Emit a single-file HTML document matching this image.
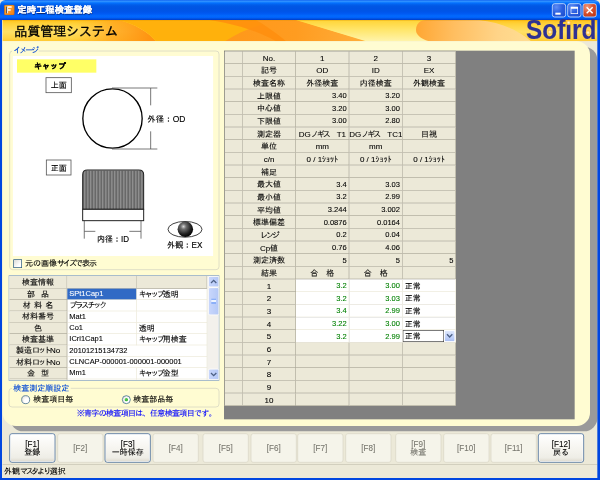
<!DOCTYPE html>
<html lang="ja"><head><meta charset="utf-8"><title>定時工程検査登録</title>
<style>
html,body{margin:0;padding:0;}
body{width:600px;height:480px;overflow:hidden;background:#0046E0;}
#w{position:absolute;left:0;top:0;width:900px;height:720px;transform:scale(0.666667);transform-origin:0 0;filter:blur(0.35px);
   font-family:"Liberation Sans","IPAGothic",sans-serif;font-size:12px;color:#000;background:#ECE9D8;overflow:hidden;line-height:1;-webkit-text-stroke:0.13px;}
#w *{box-sizing:border-box;}
.abs{position:absolute;}
.k{letter-spacing:-3px;}
#title{position:absolute;left:0;top:0;width:900px;height:30px;border-radius:8px 8px 0 0;
 background:linear-gradient(#0058EE 0%,#3A93FF 5%,#288EFF 8%,#127DFF 12%,#036FFC 16%,#0262EE 22%,#0057E5 30%,#0054E3 44%,#0055EB 60%,#005BF5 70%,#026AFE 80%,#0061FC 88%,#0054E3 93%,#0144D0 97%,#003DD7 100%);}
#title .tt{position:absolute;left:26px;top:8px;font-size:14px;font-weight:bold;color:#fff;text-shadow:1px 1px 1px #0A246A;letter-spacing:0px;white-space:nowrap;}
.bl{position:absolute;background:#0046E0;}
.wb{position:absolute;top:5px;width:21px;height:21px;border:1px solid #fff;border-radius:4px;
 background:radial-gradient(circle at 30% 25%,#5E8DF5 0%,#2A5FE0 45%,#1C4BCB 100%);}
.wb.x{background:radial-gradient(circle at 30% 25%,#F09A7E 0%,#D9512E 45%,#B8300F 100%);}
#panel{position:absolute;left:4px;top:62px;width:881px;height:577px;border-radius:0 20px 20px 20px;background:#FFFCD2;box-shadow:11px 8px 0 #9A9A9A;}
.gb{position:absolute;border:1px solid #D0D0BF;border-radius:5px;}
.gl{position:absolute;color:#0046D5;background:#FFFCD2;padding:0 2px;white-space:nowrap;}
.t{position:absolute;white-space:nowrap;}
/* info grid */
#ig{position:absolute;left:13px;top:413px;width:316px;height:158px;background:#fff;border:1px solid #7F9DB9;overflow:hidden;}
#ig .r{position:absolute;left:0;width:297px;height:17px;}
#ig .c{position:absolute;top:0;height:17px;border-right:1px solid #ECE9D8;border-bottom:1px solid #ECE9D8;padding:2px 0 0 3px;white-space:nowrap;overflow:visible;}
#ig .h{background:#ECE9D8;border-right:1px solid #ACA899;border-bottom:1px solid #ACA899;text-align:center;padding-left:0;}
/* big grid */
#bg{position:absolute;left:336px;top:76px;width:526px;height:553px;background:#808080;overflow:hidden;}
#bt{position:absolute;left:0;top:0;border-top:1px solid #716F64;border-left:1px solid #716F64;}
#bt .r{position:relative;height:19px;width:347px;}
#bt .c{position:absolute;top:0;height:19px;width:80px;background:#ECE9D8;border-right:1px solid #ACA899;border-bottom:1px solid #ACA899;padding-top:4px;text-align:center;white-space:nowrap;overflow:hidden;}
#bt .c0{left:0;width:27px;}
#bt .c1{left:27px;}
#bt .c2{left:107px;}
#bt .c3{left:187px;}
#bt .c4{left:267px;}
#bt .n{text-align:right;padding-right:3px;font-size:11.300px;}
#bt .w{background:#fff;border-right-color:#ECE9D8;border-bottom-color:#ECE9D8;}
#bt .g{color:#008000;}
#bt .l{text-align:left;padding-left:3px;}
/* fn buttons */
.fb{position:absolute;top:650px;width:69px;height:44px;border-radius:4px;text-align:center;font-size:12px;line-height:12px;}
.fb.e{border:1px solid #2D5A94;background:linear-gradient(#FFFFFF 0%,#F6F5F0 50%,#EEEDE6 85%,#DCD8CC 100%);color:#000;box-shadow:inset 0 0 0 1px #fff;}
.fb.d{border:1px solid #D8D5C4;background:#F5F4EA;color:#76756D;}
.fb span{position:absolute;left:0;right:0;}
.dot{width:6px;height:6px;border-radius:3px;background:radial-gradient(circle,#FFFBE8 0%,#FFE08A 40%,#FFA020 100%);box-shadow:0 0 1px 0.5px #FFB040;}
.fb .fl{font-size:13.500px;line-height:14px;transform:scaleX(0.9);}
.sp9{display:inline-block;width:9px;}.sp5{display:inline-block;width:5px;}
#status{position:absolute;left:4px;top:696px;width:892px;height:20px;background:#ECE9D8;border-top:1px solid #C5C2B2;}
</style></head>
<body>
<div id="w">
<div id="title">
 <svg class="abs" style="left:6px;top:7px" width="16" height="16" viewBox="0 0 16 16"><defs><linearGradient id="ic" x1="0" y1="0" x2="1" y2="1"><stop offset="0" stop-color="#FFB63C"/><stop offset="1" stop-color="#F07A10"/></linearGradient></defs><rect x="0.500" y="0.500" width="15" height="15" rx="2" fill="url(#ic)" stroke="#C8640A"/><path d="M5,3 L5,13 M5,3.500 L11.500,3.500 M5,8 L10,8" stroke="#fff" stroke-width="2.200" fill="none"/><path d="M4,3 L4,13" stroke="#222" stroke-width="1.200"/></svg>
 <div class="tt">定時工程検査登録</div>
 <div class="wb" style="left:828px"><div class="abs" style="left:4px;top:13px;width:8px;height:3px;background:#fff"></div></div>
 <div class="wb" style="left:851px"><div class="abs" style="left:4px;top:4px;width:11px;height:11px;border:1px solid #fff;border-top-width:3px"></div></div>
 <div class="wb x" style="left:874px"><svg class="abs" style="left:0;top:0" width="19" height="19"><path d="M5,5 L14,14 M14,5 L5,14" stroke="#fff" stroke-width="2.200"/></svg></div>
</div>

<svg class="abs" style="left:4px;top:30px" width="892" height="32" viewBox="2.667 20 594.667 21.333" preserveAspectRatio="none">
 <defs>
  <linearGradient id="hy" x1="0" y1="0" x2="0" y2="1">
   <stop offset="0" stop-color="#FFC21A"/><stop offset="0.18" stop-color="#FFD23A"/><stop offset="0.55" stop-color="#FFE066"/><stop offset="0.85" stop-color="#FFD445"/><stop offset="1" stop-color="#FFC830"/>
  </linearGradient>
  <linearGradient id="hy2" x1="0" y1="0" x2="0" y2="1">
   <stop offset="0" stop-color="#FFD436"/><stop offset="0.5" stop-color="#FFE770"/><stop offset="1" stop-color="#FFF4AC"/>
  </linearGradient>
  <linearGradient id="ho1" gradientUnits="userSpaceOnUse" x1="75" y1="20" x2="150" y2="34">
   <stop offset="0" stop-color="#FFB428" stop-opacity="0"/><stop offset="0.5" stop-color="#FFA41C" stop-opacity="0.75"/><stop offset="1" stop-color="#FF9412"/>
  </linearGradient>
  <linearGradient id="hbl" gradientUnits="userSpaceOnUse" x1="225" y1="30" x2="366" y2="41">
   <stop offset="0" stop-color="#FF981A"/><stop offset="0.5" stop-color="#FF9C20"/><stop offset="1" stop-color="#FFAE3C"/>
  </linearGradient>
  <linearGradient id="hb" gradientUnits="userSpaceOnUse" x1="416" y1="25" x2="525" y2="36">
   <stop offset="0" stop-color="#FFA632"/><stop offset="0.35" stop-color="#FFBE60"/><stop offset="0.75" stop-color="#FFD488"/><stop offset="1" stop-color="#FFDC90"/>
  </linearGradient>
 </defs>
 <rect x="0" y="20" width="600" height="21.333" fill="url(#hy)"/>
 <path d="M55,20 L119,20 C135,24 148,32 156,41.333 L55,41.333 Z" fill="url(#ho1)"/>
 <path d="M119,20 L296,20 L366,41.333 L156,41.333 C148,32 135,24 119,20 Z" fill="#FFB10C"/>
 <path d="M225,41.333 C236,34 250,28 262,24.500 L256,20 L296,20 L366,41.333 Z" fill="url(#hbl)"/>
 <path d="M210,20 L256,20 C266,26 278,34 286,41.333 L276,41.333 C262,33 240,25 210,20 Z" fill="#FF8E0E" opacity="0.85"/>
 <path d="M296,20 L480,20 L531,41.333 L366,41.333 Z" fill="url(#hy2)"/>
 <path d="M416,30 C416,24 420,20 426,20 L478,20 C500,22 518,30 531,41.333 L429,41.333 C420,38.500 416,34.500 416,30 Z" fill="url(#hb)"/>
 <rect x="0" y="20" width="600" height="0.6" fill="#D89000" opacity="0.45"/>
</svg>

<div class="t" style="left:21.500px;top:37.300px;font-size:20px;letter-spacing:-0.65px;-webkit-text-stroke:0.45px;">品質管理システム</div>
<div class="t" style="left:789px;top:24px;font-size:42px;font-weight:bold;color:#2E3192;transform:scaleX(0.87);transform-origin:0 0;-webkit-text-stroke:0.2px #2E3192;">Sofird</div>
<div class="abs" style="left:848.500px;top:30px;width:9.500px;height:7px;background:linear-gradient(#FFC720,#FFCF32)"></div>
<div class="abs dot" style="left:850px;top:30.500px"></div>
<div class="abs dot" style="left:821.500px;top:45px"></div>
<div class="abs dot" style="left:878.500px;top:45.500px"></div>
<div id="panel"></div>
<div class="gb" style="left:14px;top:76px;width:315px;height:329px"></div>
<div class="gl" style="left:18px;top:70px"><span class="k">イメージ</span></div>

<svg class="abs" style="left:19px;top:84px" width="301" height="300" viewBox="19 84 301 300">
 <defs>
  <radialGradient id="ball" cx="0.38" cy="0.32" r="0.7">
   <stop offset="0" stop-color="#D8D8D8"/><stop offset="0.25" stop-color="#707070"/><stop offset="0.7" stop-color="#202020"/><stop offset="1" stop-color="#000"/>
  </radialGradient>
  <clipPath id="capclip"><path d="M124,314 L124,262 Q124,255 131,255 L208,255 Q215.5,255 215.5,262 L215.5,314 Z"/></clipPath>
 </defs>
 <rect x="19" y="84" width="301" height="300" fill="#fff"/>
 <rect x="25.5" y="89" width="119" height="20" fill="#FFFF66"/>
 <rect x="69" y="116.500" width="38" height="22.500" fill="#fff" stroke="#555" stroke-width="1.2"/>
 <rect x="69.500" y="240" width="37" height="22.500" fill="#fff" stroke="#555" stroke-width="1.2"/>
 <circle cx="168.750" cy="177.750" r="44.500" fill="#fff" stroke="#000" stroke-width="2"/>
 <g stroke="#555" stroke-width="1.2" fill="none">
  <line x1="168" y1="132" x2="236" y2="132"/><line x1="168" y1="223.500" x2="236" y2="223.500"/>
  <line x1="226" y1="132" x2="226" y2="158"/><line x1="226" y1="197" x2="226" y2="223.500"/>
  <line x1="126.400" y1="331" x2="126.400" y2="358"/><line x1="126.400" y1="347" x2="143" y2="347"/>
  <line x1="211.500" y1="331" x2="211.500" y2="358"/><line x1="194" y1="347" x2="211.500" y2="347"/>
 </g>
 <path d="M124,314 L124,262 Q124,255 131,255 L208,255 Q215.5,255 215.500,262 L215.500,314 Z" fill="#B8B8B8"/>
 <g stroke="#3C3C3C" stroke-width="1.15" clip-path="url(#capclip)"><line x1="125.5" y1="256" x2="125.5" y2="314"/><line x1="127.8" y1="256" x2="127.8" y2="314"/><line x1="130.0" y1="256" x2="130.0" y2="314"/><line x1="132.2" y1="256" x2="132.2" y2="314"/><line x1="134.5" y1="256" x2="134.5" y2="314"/><line x1="136.8" y1="256" x2="136.8" y2="314"/><line x1="139.0" y1="256" x2="139.0" y2="314"/><line x1="141.2" y1="256" x2="141.2" y2="314"/><line x1="143.5" y1="256" x2="143.5" y2="314"/><line x1="145.8" y1="256" x2="145.8" y2="314"/><line x1="148.0" y1="256" x2="148.0" y2="314"/><line x1="150.2" y1="256" x2="150.2" y2="314"/><line x1="152.5" y1="256" x2="152.5" y2="314"/><line x1="154.8" y1="256" x2="154.8" y2="314"/><line x1="157.0" y1="256" x2="157.0" y2="314"/><line x1="159.2" y1="256" x2="159.2" y2="314"/><line x1="161.5" y1="256" x2="161.5" y2="314"/><line x1="163.8" y1="256" x2="163.8" y2="314"/><line x1="166.0" y1="256" x2="166.0" y2="314"/><line x1="168.2" y1="256" x2="168.2" y2="314"/><line x1="170.5" y1="256" x2="170.5" y2="314"/><line x1="172.8" y1="256" x2="172.8" y2="314"/><line x1="175.0" y1="256" x2="175.0" y2="314"/><line x1="177.2" y1="256" x2="177.2" y2="314"/><line x1="179.5" y1="256" x2="179.5" y2="314"/><line x1="181.8" y1="256" x2="181.8" y2="314"/><line x1="184.0" y1="256" x2="184.0" y2="314"/><line x1="186.2" y1="256" x2="186.2" y2="314"/><line x1="188.5" y1="256" x2="188.5" y2="314"/><line x1="190.8" y1="256" x2="190.8" y2="314"/><line x1="193.0" y1="256" x2="193.0" y2="314"/><line x1="195.2" y1="256" x2="195.2" y2="314"/><line x1="197.5" y1="256" x2="197.5" y2="314"/><line x1="199.8" y1="256" x2="199.8" y2="314"/><line x1="202.0" y1="256" x2="202.0" y2="314"/><line x1="204.2" y1="256" x2="204.2" y2="314"/><line x1="206.5" y1="256" x2="206.5" y2="314"/><line x1="208.8" y1="256" x2="208.8" y2="314"/><line x1="211.0" y1="256" x2="211.0" y2="314"/><line x1="213.2" y1="256" x2="213.2" y2="314"/><line x1="215.5" y1="256" x2="215.5" y2="314"/></g>
 <path d="M124,314 L124,262 Q124,255 131,255 L208,255 Q215.5,255 215.500,262 L215.500,314 Z" fill="none" stroke="#222" stroke-width="1.5"/>
 <rect x="124" y="314" width="91.500" height="17" fill="#fff" stroke="#222" stroke-width="1.5"/>
 <ellipse cx="277.500" cy="344" rx="25.500" ry="11.800" fill="#fff" stroke="#222" stroke-width="1.3"/>
 <circle cx="278" cy="344" r="11.600" fill="url(#ball)"/>
 <g font-family="'Liberation Sans','IPAGothic',sans-serif" fill="#000" stroke="#000" stroke-width="0.2">
  <text x="51" y="104" font-size="12" font-weight="bold">キャップ</text>
  <text x="76" y="132.500" font-size="12">上面</text>
  <text x="76" y="256" font-size="12">正面</text>
  <text x="221" y="182.500" font-size="12.500" textLength="57" lengthAdjust="spacingAndGlyphs">外径：OD</text>
  <text x="145.500" y="363.500" font-size="12.500" textLength="48" lengthAdjust="spacingAndGlyphs">内径：ID</text>
  <text x="250.500" y="371.500" font-size="12.500" textLength="53" lengthAdjust="spacingAndGlyphs">外観：EX</text>
 </g>
</svg>

<div class="abs" style="left:19.500px;top:388.500px;width:13px;height:13px;border:1px solid #1C5180;background:linear-gradient(135deg,#DCDCD7,#fff 70%)"></div>
<div class="t" style="left:37.500px;top:389px">元の画像<span class="k">サイズ</span><span style="letter-spacing:-1.500px">で表示</span></div>
<div id="ig">
<div class="r" style="top:0px;height:19px">
<div class="c h" style="left:0;width:87px;height:19px;padding-top:4px;">検査情報</div>
<div class="c h" style="left:87px;width:104px;height:19px"></div><div class="c h" style="left:191px;width:106px;height:19px"></div>
</div>
<div class="r" style="top:19px;height:17px">
<div class="c h" style="left:0;width:87px;height:17px;padding-top:2px;">部<i class="sp9"></i>品</div>
<div class="c" style="left:87px;width:104px;height:17px;background:#316AC5;color:#fff;font-size:11.200px;">SPt1Cap1</div>
<div class="c" style="left:191px;width:106px;height:17px"><span class="k">キャップ</span>透明</div>
</div>
<div class="r" style="top:36px;height:17px">
<div class="c h" style="left:0;width:87px;height:17px;padding-top:2px;">材<i class="sp5"></i>料<i class="sp5"></i>名</div>
<div class="c" style="left:87px;width:104px;height:17px;"><span class="k">プラスチック</span></div>
<div class="c" style="left:191px;width:106px;height:17px"></div>
</div>
<div class="r" style="top:53px;height:17px">
<div class="c h" style="left:0;width:87px;height:17px;padding-top:2px;">材料番号</div>
<div class="c" style="left:87px;width:104px;height:17px;font-size:11.200px;">Mat1</div>
<div class="c" style="left:191px;width:106px;height:17px"></div>
</div>
<div class="r" style="top:70px;height:17px">
<div class="c h" style="left:0;width:87px;height:17px;padding-top:2px;">色</div>
<div class="c" style="left:87px;width:104px;height:17px;font-size:11.200px;">Co1</div>
<div class="c" style="left:191px;width:106px;height:17px">透明</div>
</div>
<div class="r" style="top:87px;height:17px">
<div class="c h" style="left:0;width:87px;height:17px;padding-top:2px;">検査基準</div>
<div class="c" style="left:87px;width:104px;height:17px;font-size:11.200px;">ICri1Cap1</div>
<div class="c" style="left:191px;width:106px;height:17px"><span class="k">キャップ</span>用検査</div>
</div>
<div class="r" style="top:104px;height:17px">
<div class="c h" style="left:0;width:87px;height:17px;padding-top:2px;">製造<span class="k">ロット</span>No</div>
<div class="c" style="left:87px;width:210px;height:17px;font-size:11.200px">20101215134732</div>
</div>
<div class="r" style="top:121px;height:17px">
<div class="c h" style="left:0;width:87px;height:17px;padding-top:2px;">材料<span class="k">ロット</span>No</div>
<div class="c" style="left:87px;width:210px;height:17px;font-size:11.200px">CLNCAP-000001-000001-000001</div>
</div>
<div class="r" style="top:138px;height:17px">
<div class="c h" style="left:0;width:87px;height:17px;padding-top:2px;">金<i class="sp9"></i>型</div>
<div class="c" style="left:87px;width:104px;height:17px;font-size:11.200px;">Mm1</div>
<div class="c" style="left:191px;width:106px;height:17px"><span class="k">キャップ</span>金型</div>
</div>
<div class="r" style="top:155px;height:17px">
<div class="c h" style="left:0;width:87px;height:17px;padding-top:2px;"></div>
<div class="c" style="left:87px;width:104px;height:17px;font-size:11.200px;"></div>
<div class="c" style="left:191px;width:106px;height:17px"></div>
</div>
<div class="abs" style="left:297px;top:0;width:17px;height:156px;background:#F3F1EC;border-left:1px solid #EEEDE5;">
 <div class="abs" style="left:0;top:0;width:17px;height:17px;border:1px solid #fff;border-radius:3px;background:linear-gradient(90deg,#C9D7FC,#B4C8F6);"></div>
 <svg class="abs" style="left:0;top:0" width="17" height="17"><path d="M4.500,10.500 L8.500,6.500 L12.500,10.500" fill="none" stroke="#4D6185" stroke-width="2"/></svg>
 <div class="abs" style="left:0;top:17px;width:17px;height:42px;border:1px solid #fff;border-radius:3px;background:linear-gradient(90deg,#C9D7FC,#B4C8F6);"></div>
 <div class="abs" style="left:5px;top:34px;width:7px;height:8px;background:repeating-linear-gradient(#EEF4FE 0 1px,#8CB0F8 1px 2px);"></div>
 <div class="abs" style="left:0;top:139px;width:17px;height:17px;border:1px solid #fff;border-radius:3px;background:linear-gradient(90deg,#C9D7FC,#B4C8F6);"></div>
 <svg class="abs" style="left:0;top:139px" width="17" height="17"><path d="M4.500,6.500 L8.500,10.500 L12.500,6.500" fill="none" stroke="#4D6185" stroke-width="2"/></svg>
</div>
</div>
<div class="gb" style="left:13px;top:582px;width:316px;height:29px"></div>
<div class="gl" style="left:18px;top:576px">検査測定順設定</div>
<div class="abs" style="left:32px;top:592.500px;width:13px;height:13px;border-radius:7px;border:1px solid #1C5180;background:radial-gradient(circle at 65% 65%,#fff 30%,#DCDCD7)"></div>
<div class="t" style="left:50px;top:593px">検査項目毎</div>
<div class="abs" style="left:182.500px;top:592.500px;width:13px;height:13px;border-radius:7px;border:1px solid #1C5180;background:radial-gradient(circle at 65% 65%,#fff 30%,#DCDCD7)"></div>
<div class="abs" style="left:186.500px;top:596.500px;width:5px;height:5px;border-radius:3px;background:radial-gradient(circle at 35% 35%,#55D551,#1F9C1B)"></div>
<div class="t" style="left:200px;top:593px">検査部品毎</div>
<div class="t" style="left:115px;top:614px;color:#0000FF;width:209px;letter-spacing:-1px;">※青字の検査項目は、任意検査項目です。</div>
<div id="bg"><div id="bt">
<div class="r"><div class="c c0"></div><div class="c c1">No.</div><div class="c c2">1</div><div class="c c3">2</div><div class="c c4">3</div></div>
<div class="r"><div class="c c0"></div><div class="c c1">記号</div><div class="c c2">OD</div><div class="c c3">ID</div><div class="c c4">EX</div></div>
<div class="r"><div class="c c0"></div><div class="c c1">検査名称</div><div class="c c2">外径検査</div><div class="c c3">内径検査</div><div class="c c4">外観検査</div></div>
<div class="r"><div class="c c0"></div><div class="c c1">上限値</div><div class="c c2 n">3.40</div><div class="c c3 n">3.20</div><div class="c c4 n"></div></div>
<div class="r"><div class="c c0"></div><div class="c c1">中心値</div><div class="c c2 n">3.20</div><div class="c c3 n">3.00</div><div class="c c4 n"></div></div>
<div class="r"><div class="c c0"></div><div class="c c1">下限値</div><div class="c c2 n">3.00</div><div class="c c3 n">2.80</div><div class="c c4 n"></div></div>
<div class="r"><div class="c c0"></div><div class="c c1">測定器</div><div class="c c2">DG<span class="k">ノギス</span>　T1</div><div class="c c3">DG<span class="k">ノギス</span>　TC1</div><div class="c c4">目視</div></div>
<div class="r"><div class="c c0"></div><div class="c c1">単位</div><div class="c c2">mm</div><div class="c c3">mm</div><div class="c c4"></div></div>
<div class="r"><div class="c c0"></div><div class="c c1">c/n</div><div class="c c2">0 / 1ｼｮｯﾄ</div><div class="c c3">0 / 1ｼｮｯﾄ</div><div class="c c4">0 / 1ｼｮｯﾄ</div></div>
<div class="r"><div class="c c0"></div><div class="c c1">補足</div><div class="c c2"></div><div class="c c3"></div><div class="c c4"></div></div>
<div class="r"><div class="c c0"></div><div class="c c1">最大値</div><div class="c c2 n">3.4</div><div class="c c3 n">3.03</div><div class="c c4 n"></div></div>
<div class="r"><div class="c c0"></div><div class="c c1">最小値</div><div class="c c2 n">3.2</div><div class="c c3 n">2.99</div><div class="c c4 n"></div></div>
<div class="r"><div class="c c0"></div><div class="c c1">平均値</div><div class="c c2 n">3.244</div><div class="c c3 n">3.002</div><div class="c c4 n"></div></div>
<div class="r"><div class="c c0"></div><div class="c c1">標準偏差</div><div class="c c2 n">0.0876</div><div class="c c3 n">0.0164</div><div class="c c4 n"></div></div>
<div class="r"><div class="c c0"></div><div class="c c1"><span class="k">レンジ</span></div><div class="c c2 n">0.2</div><div class="c c3 n">0.04</div><div class="c c4 n"></div></div>
<div class="r"><div class="c c0"></div><div class="c c1">Cp値</div><div class="c c2 n">0.76</div><div class="c c3 n">4.06</div><div class="c c4 n"></div></div>
<div class="r"><div class="c c0"></div><div class="c c1">測定済数</div><div class="c c2 n" style="padding-right:3px">5</div><div class="c c3 n" style="padding-right:3px">5</div><div class="c c4 n" style="padding-right:3px">5</div></div>
<div class="r"><div class="c c0"></div><div class="c c1">結果</div><div class="c c2">合　格</div><div class="c c3">合　格</div><div class="c c4"></div></div>
<div class="r"><div class="c c0"></div><div class="c c1">1</div><div class="c c2 n w g" style="padding-right:3px">3.2</div><div class="c c3 n w g" style="padding-right:3px">3.00</div><div class="c c4 w l">正常</div></div>
<div class="r"><div class="c c0"></div><div class="c c1">2</div><div class="c c2 n w g" style="padding-right:3px">3.2</div><div class="c c3 n w g" style="padding-right:3px">3.03</div><div class="c c4 w l">正常</div></div>
<div class="r"><div class="c c0"></div><div class="c c1">3</div><div class="c c2 n w g" style="padding-right:3px">3.4</div><div class="c c3 n w g" style="padding-right:3px">2.99</div><div class="c c4 w l">正常</div></div>
<div class="r"><div class="c c0"></div><div class="c c1">4</div><div class="c c2 n w g" style="padding-right:3px">3.22</div><div class="c c3 n w g" style="padding-right:3px">3.00</div><div class="c c4 w l">正常</div></div>
<div class="r"><div class="c c0"></div><div class="c c1">5</div><div class="c c2 n w g" style="padding-right:3px">3.2</div><div class="c c3 n w g" style="padding-right:3px">2.99</div><div class="c c4 w l" style="padding:0"><div class="abs" style="left:0;top:0;width:62px;height:18px;border:1px solid #3a3a3a;padding:3px 0 0 2px;">正常</div><div class="abs" style="left:62px;top:0;width:17px;height:18px;border:1px solid #fff;border-radius:3px;background:linear-gradient(#E1EAFE,#B6C9F7 80%,#A8BDF0);"></div><svg class="abs" style="left:62px;top:0" width="17" height="18"><path d="M4.500,6.500 L8.500,10.500 L12.500,6.500" fill="none" stroke="#4D6185" stroke-width="2"/></svg></div></div>
<div class="r"><div class="c c0"></div><div class="c c1">6</div><div class="c c2"></div><div class="c c3"></div><div class="c c4"></div></div>
<div class="r"><div class="c c0"></div><div class="c c1">7</div><div class="c c2"></div><div class="c c3"></div><div class="c c4"></div></div>
<div class="r"><div class="c c0"></div><div class="c c1">8</div><div class="c c2"></div><div class="c c3"></div><div class="c c4"></div></div>
<div class="r"><div class="c c0"></div><div class="c c1">9</div><div class="c c2"></div><div class="c c3"></div><div class="c c4"></div></div>
<div class="r"><div class="c c0"></div><div class="c c1">10</div><div class="c c2"></div><div class="c c3"></div><div class="c c4"></div></div>
</div></div>
<div class="fb e" style="left:14.0px"><span class="fl" style="top:7.500px">[F1]</span><span style="top:21px">登録</span></div>
<div class="fb d" style="left:86.0px"><span class="fl" style="top:14px">[F2]</span></div>
<div class="fb e" style="left:157.0px"><span class="fl" style="top:7.500px">[F3]</span><span style="top:21px">一時保存</span></div>
<div class="fb d" style="left:229.0px"><span class="fl" style="top:14px">[F4]</span></div>
<div class="fb d" style="left:304.0px"><span class="fl" style="top:14px">[F5]</span></div>
<div class="fb d" style="left:376.0px"><span class="fl" style="top:14px">[F6]</span></div>
<div class="fb d" style="left:446.0px"><span class="fl" style="top:14px">[F7]</span></div>
<div class="fb d" style="left:517.5px"><span class="fl" style="top:14px">[F8]</span></div>
<div class="fb d" style="left:593.0px"><span class="fl" style="top:7.500px">[F9]</span><span style="top:21px">検査</span></div>
<div class="fb d" style="left:664.5px"><span class="fl" style="top:14px">[F10]</span></div>
<div class="fb d" style="left:735.6px"><span class="fl" style="top:14px">[F11]</span></div>
<div class="fb e" style="left:807.0px"><span class="fl" style="top:7.500px">[F12]</span><span style="top:21px">戻る</span></div>
<div id="status"><div class="t" style="left:2px;top:4px">外観<span class="k" style="letter-spacing:-3.500px">マスタ</span><span style="letter-spacing:-2.500px">より</span>選択</div></div>
<div class="bl" style="left:0;top:30px;width:3px;height:690px"></div>
<div class="bl" style="left:896px;top:30px;width:4px;height:690px"></div>
<div class="bl" style="left:0;top:716.500px;width:900px;height:3.500px"></div>
</div>
</body></html>
